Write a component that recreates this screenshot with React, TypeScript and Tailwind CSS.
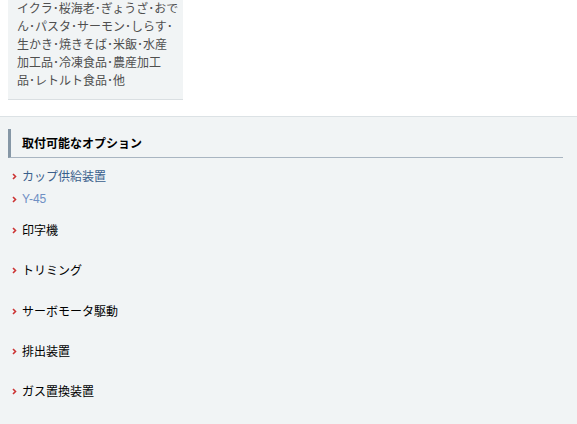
const jp = { fontFamily: '"Noto Sans CJK JP", "Liberation Sans", sans-serif' };

const Chevron = () => (
  <svg width="5" height="7" viewBox="0 0 5 7" className="shrink-0">
    <polyline points="1,1 3.5,3.5 1,6" fill="none" stroke="#cc3333" strokeWidth="1.6" />
  </svg>
);

const links = [
  { label: 'カップ供給装置', color: 'text-[#3a5f8c]', mt: 'mt-[9px]', latin: false },
  { label: 'Y-45', color: 'text-[#6f8fc4]', mt: 'mt-[5px]', latin: true },
];

const options = [
  { label: '印字機', mt: 'mt-[13px]' },
  { label: 'トリミング', mt: 'mt-[22px]' },
  { label: 'サーボモータ駆動', mt: 'mt-[23px]' },
  { label: '排出装置', mt: 'mt-[22px]' },
  { label: 'ガス置換装置', mt: 'mt-[22px]' },
];

const App = () => {
  return (
    <div className="w-[577px] h-[424px] bg-white overflow-hidden" style={jp}>
      <div className="ml-[8px] w-[175px] bg-[#f1f4f5] border-b border-[#dadfe2] pl-[9px] pb-[10px] -mt-px">
        <p className="text-[12px] leading-[18px] text-[#4f4f4f] whitespace-nowrap">
          イクラ･桜海老･ぎょうざ･おで
          <br />
          ん･パスタ･サーモン･しらす･
          <br />
          生かき･焼きそば･米飯･水産
          <br />
          加工品･冷凍食品･農産加工
          <br />
          品･レトルト食品･他
        </p>
      </div>

      <section className="mt-[16px] border-t border-[#dce2e5] bg-[#f1f4f5] h-[400px] pt-[12px]">
        <div className="ml-[8px] mr-[14px] h-[29px] border-l-[3px] border-l-[#8697a6] border-b border-b-[#a9b5c1] flex items-center pl-[11px]">
          <h2 className="text-[12px] font-bold text-black leading-none">取付可能なオプション</h2>
        </div>

        <ul>
          {links.map((l) => (
            <li key={l.label} className={`${l.mt} h-[18px] flex items-center pl-[12px] gap-[5px]`}>
              <Chevron />
              <a
                className={`text-[12px] leading-[18px] ${l.color} ${l.latin ? 'font-["Liberation_Sans",sans-serif]' : ''}`}
              >
                {l.label}
              </a>
            </li>
          ))}
          {options.map((o) => (
            <li key={o.label} className={`${o.mt} h-[18px] flex items-center pl-[12px] gap-[5px]`}>
              <Chevron />
              <span className="text-[12px] leading-[18px] text-black">{o.label}</span>
            </li>
          ))}
        </ul>
      </section>
    </div>
  );
};

export default App;
